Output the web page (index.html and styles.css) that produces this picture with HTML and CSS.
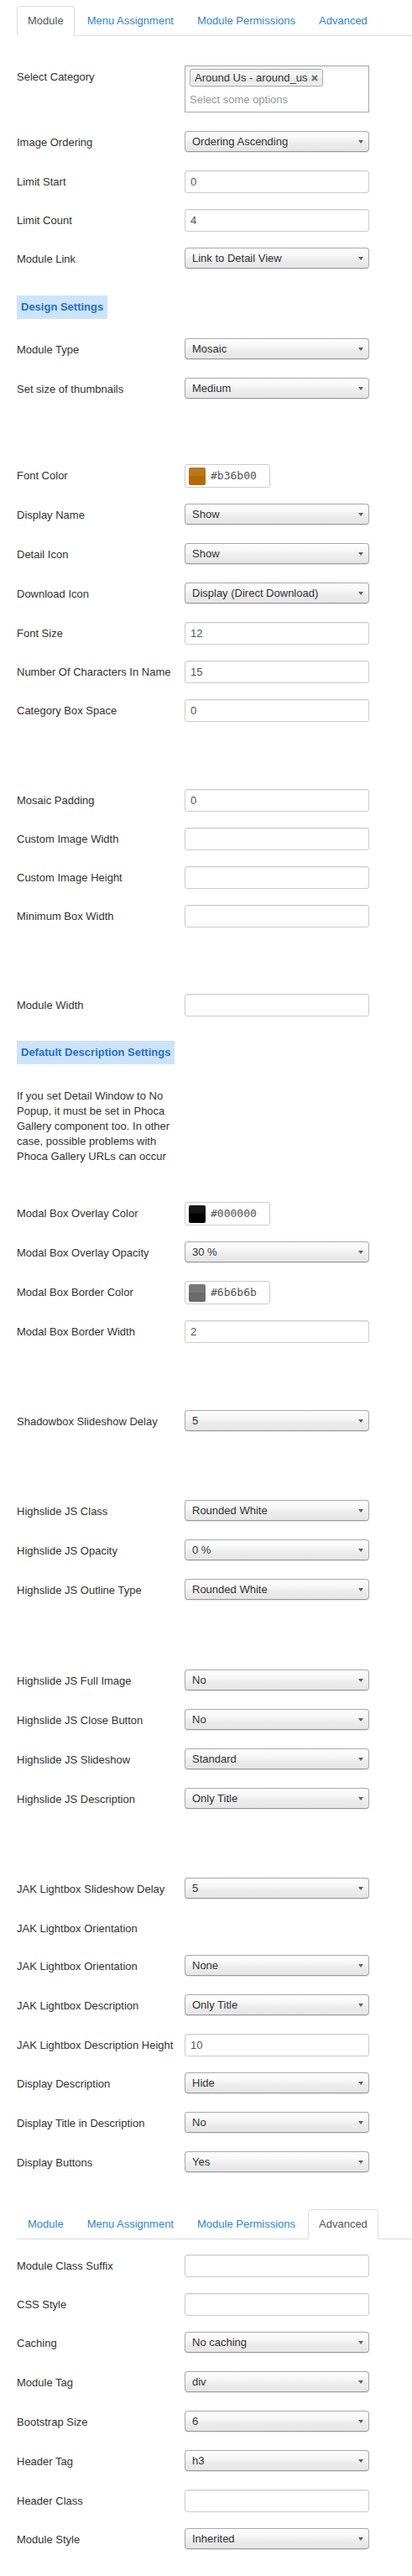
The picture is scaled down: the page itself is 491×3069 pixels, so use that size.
FILE: index.html
```html
<!DOCTYPE html>
<html lang="en">
<head>
<meta charset="utf-8">
<title>Module settings</title>
<link rel="stylesheet" href="styles.css">
</head>
<body>
<div class="page">
  <ul class="tabs">
    <li class="active"><a>Module</a></li>
    <li><a>Menu Assignment</a></li>
    <li><a>Module Permissions</a></li>
    <li><a>Advanced</a></li>
  </ul>

  <div class="form">
    <div class="row row-multi">
      <label class="lbl">Select Category</label>
      <div class="ctl">
        <div class="multi">
          <span class="chip">Around Us - around_us<svg class="chip-x" width="8" height="8" viewBox="0 0 8 8"><path d="M1 1L7 7M7 1L1 7" stroke="#6f6f6f" stroke-width="2"/></svg></span>
          <span class="placeholder">Select some options</span>
        </div>
      </div>
    </div>
    <div class="row"><label class="lbl">Image Ordering</label><div class="ctl"><div class="select">Ordering Ascending</div></div></div>
    <div class="row"><label class="lbl">Limit Start</label><div class="ctl"><input class="input" type="text" value="0"></div></div>
    <div class="row"><label class="lbl">Limit Count</label><div class="ctl"><input class="input" type="text" value="4"></div></div>
    <div class="row"><label class="lbl">Module Link</label><div class="ctl"><div class="select">Link to Detail View</div></div></div>

    <div class="hdr">Design Settings</div>

    <div class="row"><label class="lbl">Module Type</label><div class="ctl"><div class="select">Mosaic</div></div></div>
    <div class="row"><label class="lbl">Set size of thumbnails</label><div class="ctl"><div class="select">Medium</div></div></div>
    <div class="spacer short"></div>
    <div class="row"><label class="lbl">Font Color</label><div class="ctl"><div class="color"><span class="swatch sw-brown"></span><span class="hex">#b36b00</span></div></div></div>
    <div class="row"><label class="lbl">Display Name</label><div class="ctl"><div class="select">Show</div></div></div>
    <div class="row"><label class="lbl">Detail Icon</label><div class="ctl"><div class="select">Show</div></div></div>
    <div class="row"><label class="lbl">Download Icon</label><div class="ctl"><div class="select">Display (Direct Download)</div></div></div>
    <div class="row"><label class="lbl">Font Size</label><div class="ctl"><input class="input" type="text" value="12"></div></div>
    <div class="row"><label class="lbl">Number Of Characters In Name</label><div class="ctl"><input class="input" type="text" value="15"></div></div>
    <div class="row"><label class="lbl">Category Box Space</label><div class="ctl"><input class="input" type="text" value="0"></div></div>
    <div class="spacer"></div>
    <div class="row"><label class="lbl">Mosaic Padding</label><div class="ctl"><input class="input" type="text" value="0"></div></div>
    <div class="row"><label class="lbl">Custom Image Width</label><div class="ctl"><input class="input" type="text" value=""></div></div>
    <div class="row"><label class="lbl">Custom Image Height</label><div class="ctl"><input class="input" type="text" value=""></div></div>
    <div class="row"><label class="lbl">Minimum Box Width</label><div class="ctl"><input class="input" type="text" value=""></div></div>
    <div class="spacer"></div>
    <div class="row"><label class="lbl">Module Width</label><div class="ctl"><input class="input" type="text" value=""></div></div>

    <div class="hdr">Defatult Description Settings</div>
    <p class="note">If you set Detail Window to No Popup, it must be set in Phoca Gallery component too. In other case, possible problems with Phoca Gallery URLs can occur</p>

    <div class="row"><label class="lbl">Modal Box Overlay Color</label><div class="ctl"><div class="color"><span class="swatch sw-black"></span><span class="hex">#000000</span></div></div></div>
    <div class="row"><label class="lbl">Modal Box Overlay Opacity</label><div class="ctl"><div class="select">30 %</div></div></div>
    <div class="row"><label class="lbl">Modal Box Border Color</label><div class="ctl"><div class="color"><span class="swatch sw-gray"></span><span class="hex">#6b6b6b</span></div></div></div>
    <div class="row"><label class="lbl">Modal Box Border Width</label><div class="ctl"><input class="input" type="text" value="2"></div></div>
    <div class="spacer"></div>
    <div class="row"><label class="lbl">Shadowbox Slideshow Delay</label><div class="ctl"><div class="select">5</div></div></div>
    <div class="spacer"></div>
    <div class="row"><label class="lbl">Highslide JS Class</label><div class="ctl"><div class="select">Rounded White</div></div></div>
    <div class="row"><label class="lbl">Highslide JS Opacity</label><div class="ctl"><div class="select">0 %</div></div></div>
    <div class="row"><label class="lbl">Highslide JS Outline Type</label><div class="ctl"><div class="select">Rounded White</div></div></div>
    <div class="spacer"></div>
    <div class="row"><label class="lbl">Highslide JS Full Image</label><div class="ctl"><div class="select">No</div></div></div>
    <div class="row"><label class="lbl">Highslide JS Close Button</label><div class="ctl"><div class="select">No</div></div></div>
    <div class="row"><label class="lbl">Highslide JS Slideshow</label><div class="ctl"><div class="select">Standard</div></div></div>
    <div class="row"><label class="lbl">Highslide JS Description</label><div class="ctl"><div class="select">Only Title</div></div></div>
    <div class="spacer"></div>
    <div class="row"><label class="lbl">JAK Lightbox Slideshow Delay</label><div class="ctl"><div class="select">5</div></div></div>
    <div class="row row-label"><label class="lbl">JAK Lightbox Orientation</label></div>
    <div class="row"><label class="lbl">JAK Lightbox Orientation</label><div class="ctl"><div class="select">None</div></div></div>
    <div class="row"><label class="lbl">JAK Lightbox Description</label><div class="ctl"><div class="select">Only Title</div></div></div>
    <div class="row"><label class="lbl">JAK Lightbox Description Height</label><div class="ctl"><input class="input" type="text" value="10"></div></div>
    <div class="row"><label class="lbl">Display Description</label><div class="ctl"><div class="select">Hide</div></div></div>
    <div class="row"><label class="lbl">Display Title in Description</label><div class="ctl"><div class="select">No</div></div></div>
    <div class="row"><label class="lbl">Display Buttons</label><div class="ctl"><div class="select">Yes</div></div></div>
  </div>

  <ul class="tabs tabs-second">
    <li><a>Module</a></li>
    <li><a>Menu Assignment</a></li>
    <li><a>Module Permissions</a></li>
    <li class="active"><a>Advanced</a></li>
  </ul>

  <div class="form">
    <div class="row"><label class="lbl">Module Class Suffix</label><div class="ctl"><input class="input" type="text" value=""></div></div>
    <div class="row"><label class="lbl">CSS Style</label><div class="ctl"><input class="input" type="text" value=""></div></div>
    <div class="row"><label class="lbl">Caching</label><div class="ctl"><div class="select">No caching</div></div></div>
    <div class="row"><label class="lbl">Module Tag</label><div class="ctl"><div class="select">div</div></div></div>
    <div class="row"><label class="lbl">Bootstrap Size</label><div class="ctl"><div class="select">6</div></div></div>
    <div class="row"><label class="lbl">Header Tag</label><div class="ctl"><div class="select">h3</div></div></div>
    <div class="row"><label class="lbl">Header Class</label><div class="ctl"><input class="input" type="text" value=""></div></div>
    <div class="row"><label class="lbl">Module Style</label><div class="ctl"><div class="select">Inherited</div></div></div>
  </div>
</div>
</body>
</html>
```

FILE: styles.css
```css
* { box-sizing: border-box; }

html, body {
  margin: 0;
  padding: 0;
  background: #fff;
}

body {
  font-family: "Liberation Sans", Arial, Helvetica, sans-serif;
  font-size: 13px;
  line-height: 18px;
  color: #333;
}

.page {
  padding: 7px 0 0 20px;
  min-height: 3069px;
}

/* Tabs */
.tabs {
  list-style: none;
  margin: 0 0 35px;
  padding: 0;
  display: flex;
  border-bottom: 1px solid #ddd;
}
.tabs li {
  margin: 0 2px -1px 0;
}
.tabs a {
  display: block;
  padding: 8px 12px;
  line-height: 18px;
  border: 1px solid transparent;
  border-radius: 4px 4px 0 0;
  color: #2f87d3;
  white-space: nowrap;
}
.tabs li.active a {
  color: #555;
  background: #fff;
  border-color: #ddd #ddd transparent;
}
.tabs-second {
  margin: 40px 0 18px;
}

/* Form rows */
.row {
  display: flex;
  align-items: flex-start;
  min-height: 28px;
  margin-bottom: 18px;
}
.row-label {
  min-height: 27px;
}
.lbl {
  flex: none;
  width: 200px;
  padding-top: 5px;
  line-height: 18px;
  white-space: nowrap;
}
.ctl {
  flex: none;
  width: 220px;
}

.input {
  display: block;
  width: 220px;
  height: 27px;
  margin: 0;
  padding: 0 6px;
  border: 1px solid #ccc;
  border-radius: 3px;
  background: #fff;
  box-shadow: inset 0 1px 1px rgba(0, 0, 0, 0.075);
  font: inherit;
  color: #555;
}

.select {
  position: relative;
  height: 25px;
  margin-bottom: 4px;
  padding: 0 8px;
  border: 1px solid #a9a9a9;
  border-bottom-color: #999;
  border-radius: 4px;
  background: linear-gradient(#fefefe 0%, #f6f6f6 40%, #ececec 60%, #e6e6e6 100%);
  box-shadow: 0 1px 1px rgba(0, 0, 0, 0.1);
  line-height: 23px;
  color: #333;
  white-space: nowrap;
}
.select::after {
  content: "";
  position: absolute;
  right: 6px;
  top: 10px;
  border-left: 3.5px solid transparent;
  border-right: 3.5px solid transparent;
  border-top: 4.5px solid #606060;
}

/* Color pickers */
.color {
  display: flex;
  align-items: center;
  width: 102px;
  height: 28px;
  margin-bottom: 1px;
  padding: 0 4px;
  border: 1px solid #ccc;
  border-radius: 3px;
  background: #fff;
}
.swatch {
  flex: none;
  width: 20px;
  height: 21px;
  border-radius: 2px;
  margin-right: 6px;
}
.sw-brown {
  background: linear-gradient(#bb7a1d 0%, #b8771a 45%, #b36b00 50%, #b36b00 100%);
}
.sw-black {
  background: linear-gradient(#1a1a1a 0%, #111 45%, #000 50%, #000 100%);
}
.sw-gray {
  background: linear-gradient(#7a7a7a 0%, #767676 45%, #6b6b6b 50%, #6b6b6b 100%);
}
.hex {
  font-family: "DejaVu Sans Mono", "Liberation Mono", monospace;
  font-size: 13px;
  color: #555;
}

/* Multi select */
.multi {
  height: 56px;
  margin-bottom: 4.3px;
  padding: 3px 5px;
  border: 1px solid #aaa;
  background: linear-gradient(#eee 0%, #fff 12%);
}
.chip {
  position: relative;
  display: inline-block;
  height: 21px;
  padding: 0 18px 0 5px;
  border: 1px solid #aaa;
  border-radius: 3px;
  background: linear-gradient(#f4f4f4 20%, #f0f0f0 50%, #e8e8e8 52%, #eee 100%);
  box-shadow: inset 0 0 2px #fff, 0 1px 0 rgba(0, 0, 0, 0.05);
  line-height: 19px;
  color: #333;
}
.chip-x {
  position: absolute;
  right: 5px;
  top: 6px;
}
.placeholder {
  display: block;
  margin-top: 7px;
  color: #999;
}

/* Section headers */
.hdr {
  width: fit-content;
  padding: 5px;
  margin: 27.7px 0 23.3px;
  background: #cce4fb;
  color: #2a6fc0;
  font-weight: bold;
  line-height: 18px;
}

.note {
  width: 200px;
  margin: 29px 0 45.3px;
  line-height: 18px;
}

.spacer {
  height: 42.5px;
  margin-bottom: 18px;
}
.spacer.short {
  height: 38px;
}
```
